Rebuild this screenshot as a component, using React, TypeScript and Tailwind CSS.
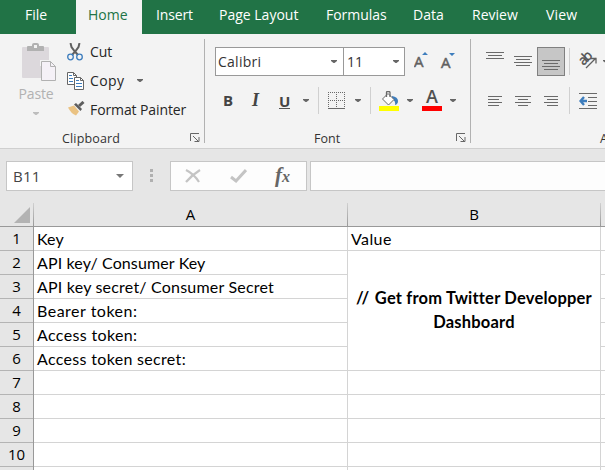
import type { ReactNode } from "react";

const UI = "font-['Open_Sans','Noto_Sans',sans-serif]";
const CELL = "font-['Lato','Open_Sans',sans-serif]";

const tabs = [
  { label: "File", box: "w-[76px] pl-[25px]" },
  { label: "Home", box: "w-[66px] pl-3 bg-[#f3f3f3] text-[#217346]" },
  { label: "Insert", box: "w-[63px] pl-[14px] tracking-[-0.15px]" },
  { label: "Page Layout", box: "w-[107px] pl-[14px]" },
  { label: "Formulas", box: "w-[87px] pl-[14px] tracking-[-0.05px]" },
  { label: "Data", box: "w-[59px] pl-[14px]" },
  { label: "Review", box: "w-[74px] pl-[14px]" },
  { label: "View", box: "w-[73px] pl-[14px] tracking-[0.2px]" },
];

const rows = [
  { text: "Key", spacing: "tracking-[0.1px]" },
  { text: "API key/ Consumer Key", spacing: "tracking-[0.12px]" },
  { text: "API key secret/ Consumer Secret", spacing: "tracking-[0.2px]" },
  { text: "Bearer token:", spacing: "tracking-[0.5px]" },
  { text: "Access token:", spacing: "tracking-[0.35px]" },
  { text: "Access token secret:", spacing: "tracking-[0.32px]" },
  { text: "", spacing: "" },
  { text: "", spacing: "" },
  { text: "", spacing: "" },
  { text: "", spacing: "" },
];

function Arrow({ className = "" }: { className?: string }) {
  return (
    <svg className={`block h-[3px] w-[6px] shrink-0 ${className || "text-[#666]"}`} viewBox="0 0 6 3" preserveAspectRatio="none">
      <path d="M0 0h6v1L3.500 3h-1L0 1z" fill="currentColor" />
    </svg>
  );
}

function Launcher() {
  return (
    <svg className="block h-[10px] w-[10px] shrink-0" viewBox="0 0 10 10" fill="none" stroke="#666">
      <path d="M.5 8V.5H9M3 3l5 5M9 4v4.500H4.500" />
    </svg>
  );
}

function Lines({ d, box }: { d: string; box: string }) {
  return (
    <svg className={`block h-[10px] w-[18px] shrink-0 ${box}`} viewBox="0 0 18 10" stroke="#6a6a6a" fill="none">
      <path d={d} />
    </svg>
  );
}

function Divider({ className = "" }: { className?: string }) {
  return <div className={`h-[27px] w-px shrink-0 bg-[#d0d0d0] ${className}`} />;
}

function Command({ icon, children }: { icon: ReactNode; children: ReactNode }) {
  return (
    <div className="flex h-[29px] items-center">
      <div className="flex w-[23px] shrink-0 items-center">{icon}</div>
      {children}
    </div>
  );
}

function Clipboard() {
  return (
    <section className="flex h-[114px] w-[204px] shrink-0 flex-col">
      <div className="flex h-[93px]">
        <div className="flex w-[67px] flex-col items-center pt-[9px] pl-[5px]">
          <svg className="ml-[6px] block h-[38px] w-[34px]" viewBox="0 0 34 38">
            <path d="M1 4h25q1 0 1 1v29q0 1-1 1H1q-1 0-1-1V5q0-1 1-1z" fill="#dcd8dc" />
            <path d="M5 8V4q0-1 1-1h4V2q0-2 2-2h3q2 0 2 2v1h4q1 0 1 1v4z" fill="#b1b1b1" />
            <path d="M12 2h3v3h-3z" fill="#f3f3f3" />
            <path d="M18 17h12l4 4v2h-16z" fill="#f3f3f3" />
            <path d="M19.500 18.500h9l5 5v14h-14z" fill="#f5f1f7" stroke="#b1b1b1" />
            <path d="M28.500 18.500v5h5" fill="none" stroke="#b1b1b1" />
          </svg>
          <span className="mt-[2px] text-[14px] leading-[22px] tracking-[-0.1px] text-[#b1b1b1]">Paste</span>
          <Arrow className="mt-[7px] text-[#bdbdbd]" />
        </div>
        <div className="flex flex-col pt-[3px] text-[14px] text-[#262626]">
          <Command
            icon={
              <svg className="block h-[18px] w-[16px]" viewBox="0 0 16 18" fill="none">
                <path d="M3.500 0l1 4 3 4 3.500 4M12.500 0l-1 4-3 4L5 12" stroke="#606060" strokeWidth="2" />
                <circle cx="3.500" cy="14" r="2.800" stroke="#3d7dbd" strokeWidth="1.300" />
                <circle cx="12.500" cy="14" r="2.800" stroke="#3d7dbd" strokeWidth="1.300" />
              </svg>
            }
          >
            <span className="tracking-[-0.1px]">Cut</span>
          </Command>
          <Command
            icon={
              <svg className="block h-[18px] w-[17px]" viewBox="0 0 17 18">
                <g fill="#fff" stroke="#666">
                  <path d="M.5.5h6l3 3v9h-9z" />
                  <path d="M7.500 5.500h6l3 3v9h-9z" />
                  <path d="M13.500 5.500v3h3M6.500.5v3h3" fill="none" />
                </g>
                <path d="M2 3.500h3M2 6.500h4M2 9.500h4M9 8.500h3M9 11.500h6M9 14.500h6" stroke="#3d7dbd" />
              </svg>
            }
          >
            <span className="w-[47px] tracking-[0.4px]">Copy</span>
            <Arrow />
          </Command>
          <Command
            icon={
              <svg className="mt-[-2px] ml-px block h-[15px] w-[17px]" viewBox="0 0 17 15">
                <path d="M0 6.500l6-2 5 6-3 4q-5-2-8-8z" fill="#eac282" />
                <path d="M6 3.500l2-1.500 6 6-1.500 2z" fill="#5d5d5d" />
                <path d="M11 5l4.500-4" stroke="#5d5d5d" strokeWidth="3" />
              </svg>
            }
          >
            <span className="tracking-[-0.1px]">Format Painter</span>
          </Command>
        </div>
      </div>
      <div className="flex h-[21px] items-center pl-[62px] text-[12.500px] text-[#333]">
        <span className="mt-[3px] w-[128px] tracking-[0.15px]">Clipboard</span>
        <Launcher />
      </div>
    </section>
  );
}

function FontGroup() {
  return (
    <section className="flex h-[114px] w-[265px] shrink-0 flex-col text-[#444]">
      <div className="flex h-[42px] pt-[13px] pl-[10px]">
        <div className="flex h-[29px] w-[129px] shrink-0 items-center justify-between border border-[#999] bg-white pr-[6px] pl-[2px] text-[14px] text-[#333]">
          <span className="tracking-[0.25px]">Calibri</span>
          <Arrow />
        </div>
        <div className="-ml-px flex h-[29px] w-[62px] shrink-0 items-center justify-between border border-[#999] bg-white pr-[5px] pl-[3px] text-[14px] text-[#333]">
          <span>11</span>
          <Arrow />
        </div>
        <svg className="ml-[9px] block h-[29px] w-[46px]" viewBox="0 0 46 29">
          <text x="0" y="20" fontSize="15" fill="#606060" stroke="#606060" strokeWidth=".5" className={UI}>A</text>
          <text x="27" y="20.500" fontSize="15" fill="#606060" stroke="#606060" strokeWidth=".5" className={UI}>A</text>
          <path d="M8 8l3-3 3 3zM35 6h6l-3 3z" fill="#3d7dbd" />
        </svg>
      </div>
      <div className="flex h-[51px] items-start pt-[10px]">
        <div className="flex h-[29px] w-full items-center pl-[18px]">
          <span className="-mt-px w-[29px] text-[15px] font-bold">B</span>
          <span className="w-[27px] font-['Liberation_Serif',serif] text-[18px] font-bold italic">I</span>
          <span className="mt-[1px] w-[11px] border-b border-[#555] text-center text-[15px] leading-[14px] font-bold">U</span>
          <Arrow className="ml-[13px] text-[#666]" />
          <Divider className="ml-[9px]" />
          <svg className="ml-[9px] block h-[18px] w-[17px]" viewBox="0 0 17 18" stroke="#6a6a6a" fill="none">
            <path d="M0 .5h17M0 8.500h17M.5 0v16M8.500 0v16M16.500 0v16" strokeDasharray="1 1" />
            <path d="M0 16.500h17" />
          </svg>
          <Arrow className="ml-[10px] text-[#666]" />
          <Divider className="ml-[9px]" />
          <svg className="ml-[8px] block h-[20px] w-[20px]" viewBox="0 0 20 20">
            <path d="M0 15h20v5H0z" fill="#ff0" />
            <path d="M13 5q6 1 6 5 0 3-3 4 1-4-3-6z" fill="#3d7dbd" />
            <path d="M9 2.500l6 6L9.500 14l-6-6z" fill="#fff" stroke="#6a6a6a" />
            <path d="M7.500 6V1.500q0-1 1-1h1q1.500 0 1.500 1V6" fill="none" stroke="#6a6a6a" strokeWidth="1.300" />
          </svg>
          <Arrow className="ml-[8px] text-[#666]" />
          <div className="ml-[9px] flex h-[28px] w-[20px] flex-col items-center justify-end">
            <span className="-mb-[2px] text-[18px] leading-[24px] font-semibold text-[#505050]">A</span>
            <i className="mb-[4px] block h-[5px] w-[20px] shrink-0 bg-[#f00]" />
          </div>
          <Arrow className="ml-[8px] text-[#666]" />
        </div>
      </div>
      <div className="flex h-[21px] items-center pl-[109px] text-[12.500px] text-[#333]">
        <span className="mt-[3px] w-[142px]">Font</span>
        <Launcher />
      </div>
    </section>
  );
}

function Alignment() {
  return (
    <section className="flex h-[114px] w-[134px] shrink-0 flex-col overflow-hidden">
      <div className="flex h-[42px] items-start pt-[13px]">
        <Lines box="ml-[15px] mt-[5px]" d="M0 .5h18M2 3.500h14M0 6.500h18" />
        <Lines box="ml-[10px] mt-[9px]" d="M0 .5h18M2 3.500h14M0 6.500h18M2 9.500h14" />
        <div className="ml-[5px] flex h-[29px] w-[28px] shrink-0 justify-center border border-[#808080] bg-[#c6c6c6] pt-[12px]">
          <Lines box="" d="M0 .5h18M2 3.500h14M0 6.500h18M2 9.500h14" />
        </div>
        <Divider className="mt-px ml-[4px]" />
        <svg className="mt-[4px] ml-[8px] block h-[20px] w-[20px] shrink-0 overflow-visible" viewBox="0 0 20 20">
          <text transform="translate(5.500 15) rotate(-45)" fontSize="13.500" fill="#505050" stroke="#505050" strokeWidth=".4" className={UI} textLength="14">ab</text>
          <path d="M8 17L18 7M13 7.500h5v5" stroke="#606060" strokeWidth="1.300" fill="none" />
        </svg>
        <Arrow className="mt-[13px] ml-[5px] text-[#666]" />
      </div>
      <div className="flex h-[51px] items-start pt-[10px]">
        <div className="flex h-[29px] items-center">
          <Lines box="ml-[17px]" d="M0 .5h14M0 3.500h11M0 6.500h14M0 9.500h11" />
          <Lines box="ml-[9px]" d="M0 .5h16M3 3.500h10M0 6.500h16M3 9.500h10" />
          <Lines box="ml-[11px]" d="M0 .5h14M3 3.500h11M0 6.500h14M3 9.500h11" />
          <Divider className="ml-[7px]" />
          <svg className="ml-[9px] block h-[16px] w-[18px] shrink-0" viewBox="0 0 18 16" fill="none">
            <path d="M0 .5h18M9 4.500h9M9 8.500h9M9 12.500h9M0 15.500h18" stroke="#6a6a6a" />
            <path d="M8 8H2M5 4L1.500 8 5 12" stroke="#3d7dbd" strokeWidth="2.400" />
          </svg>
        </div>
      </div>
      <div className="flex h-[21px] items-center pt-[3px] pl-[129px] text-[12.500px] text-[#333]">Alignment</div>
    </section>
  );
}

function Ribbon() {
  return (
    <div className="flex h-[115px] shrink-0 border-b border-[#cfcfcf] bg-[#f3f3f3]">
      <Clipboard />
      <div className="mt-[5px] h-[104px] w-px shrink-0 bg-[#b1b1b1]" />
      <FontGroup />
      <div className="mt-[5px] h-[104px] w-px shrink-0 bg-[#b1b1b1]" />
      <Alignment />
    </div>
  );
}

function FormulaBar() {
  return (
    <div className="flex h-[54px] shrink-0 items-start pt-[12px] pl-[6px]">
      <div className="flex h-[30px] w-[127px] items-center justify-between border border-[#c6c6c6] bg-white pr-[8px] pl-[6px] text-[15px] text-[#444]">
        <span className="tracking-[0.2px]">B11</span>
        <svg className="block h-[4px] w-[8px]" viewBox="0 0 8 4"><path d="M0 0h8L4 4z" fill="#777" /></svg>
      </div>
      <div className="ml-[17px] flex h-[28px] flex-col justify-center gap-[2px]">
        <i className="block size-[3px] bg-[#b0b0b0]" />
        <i className="block size-[3px] bg-[#b0b0b0]" />
        <i className="block size-[3px] bg-[#b0b0b0]" />
      </div>
      <div className="ml-[17px] flex h-[30px] w-[137px] items-center border border-[#c6c6c6] bg-[#fdfdfd] pl-[14px]">
        <svg className="block h-[16px] w-[16px]" viewBox="0 0 16 16" stroke="#c4c4c4" strokeWidth="2.200" fill="none">
          <path d="M1 2q8 4 13 12M15 2Q7 7 1 14" />
        </svg>
        <svg className="ml-[29px] block h-[16px] w-[17px]" viewBox="0 0 17 16" stroke="#c4c4c4" strokeWidth="3" fill="none">
          <path d="M1 9l5 4L16 2" />
        </svg>
        <span className="-mt-[2px] ml-[28px] font-['Liberation_Serif',serif] text-[21px] leading-none text-[#666] italic">
          <b>f</b><b className="text-[16px]">x</b>
        </span>
      </div>
      <div className="ml-[3px] h-[30px] flex-1 border border-r-0 border-[#c6c6c6] bg-[#fdfdfd]" />
    </div>
  );
}

function HeaderEdge() {
  return <div className="h-full w-px shrink-0 bg-linear-to-b from-[#d0d0d0] to-[#999]" />;
}

function Sheet() {
  return (
    <div className={`flex-1 ${CELL} text-[16px] text-black`}>
      <div className={`flex h-[24px] shrink-0 border-b border-[#999] text-[15px] ${UI}`}>
        <div className="flex w-[33px] shrink-0 justify-end pt-[4px] pr-[3px]">
          <svg className="block h-[16px] w-[16px]" viewBox="0 0 16 16"><path d="M16 0v16H0z" fill="#b3b3b3" /></svg>
        </div>
        <HeaderEdge />
        <div className="w-[313px] shrink-0 text-center leading-[23px]">A</div>
        <HeaderEdge />
        <div className="w-[252px] shrink-0 text-center leading-[23px]">B</div>
        <HeaderEdge />
      </div>
      <div className="flex">
        <div className={`w-[34px] shrink-0 border-r border-[#999] bg-[#e6e6e6] text-[15px] ${UI}`}>
          {rows.map((_, i) => (
            <div key={i} className="h-[24px] border-b border-[#b4b4b4] text-center leading-[23px]">{i + 1}</div>
          ))}
        </div>
        <div className="w-[314px] shrink-0 border-r border-[#d4d4d4] bg-white">
          {rows.map((row, i) => (
            <div key={i} className={`h-[24px] border-b border-[#d4d4d4] pl-[3px] leading-[23px] whitespace-nowrap ${row.spacing}`}>{row.text}</div>
          ))}
          <div className="h-[4px]" />
        </div>
        <div className="w-[253px] shrink-0 border-r border-[#d4d4d4] bg-white">
          <div className="h-[24px] border-b border-[#d4d4d4] pl-[3px] leading-[23px] tracking-[0.4px]">Value</div>
          <div className="flex h-[120px] items-center justify-center border-b border-[#d4d4d4] pb-[2px] text-center text-[16.500px] leading-[24px] font-bold tracking-[0.2px]">
            <p><span className="tracking-[1.500px]">//</span> Get from Twitter Developper<br />Dashboard</p>
          </div>
          {rows.slice(6).map((_, i) => (
            <div key={i} className="h-[24px] border-b border-[#d4d4d4]" />
          ))}
        </div>
        <div className="flex-1 bg-white">
          {rows.map((_, i) => (
            <div key={i} className="h-[24px] border-b border-[#d4d4d4]" />
          ))}
        </div>
      </div>
    </div>
  );
}

export default function App() {
  return (
    <div className={`flex h-[470px] w-[605px] flex-col overflow-hidden bg-[#e6e6e6] ${UI}`}>
      <nav className="flex h-[34px] shrink-0 bg-[#217346] text-[14px] leading-[30px] text-white">
        {tabs.map((t) => (
          <div key={t.label} className={`shrink-0 whitespace-nowrap ${t.box}`}>{t.label}</div>
        ))}
      </nav>
      <Ribbon />
      <FormulaBar />
      <Sheet />
    </div>
  );
}
